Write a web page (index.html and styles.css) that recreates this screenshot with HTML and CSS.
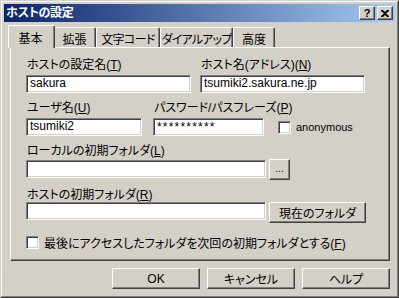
FILE: index.html
```html
<!DOCTYPE html>
<html lang="ja">
<head>
<meta charset="utf-8">
<title>ホストの設定</title>
<link rel="stylesheet" href="styles.css">
</head>
<body>
<div class="window">
  <div class="frame">
    <div class="titlebar">
      <span class="title">ホストの設定</span>
      <div class="caption-buttons">
        <span class="cbtn help-btn">?</span>
        <span class="cbtn close-btn">
          <svg width="8" height="7" viewBox="0 0 8 7"><path d="M0 0h2l2 2 2-2h2v1L5 3.5 8 6v1H6L4 5 2 7H0V6l3-2.5L0 1z" fill="#000"/></svg>
        </span>
      </div>
    </div>
    <div class="tabs">
      <div class="tab sel t1">基本</div>
      <div class="tab t2">拡張</div>
      <div class="tab t3">文字コード</div>
      <div class="tab t4">ダイアルアップ</div>
      <div class="tab t5">高度</div>
    </div>
    <div class="panel">
      <div class="row r1">
        <div class="field f-name">
          <div class="label">ホストの設定名(<u>T</u>)</div>
          <div class="input">sakura</div>
        </div>
        <div class="field f-host">
          <div class="label">ホスト名(アドレス)(<u>N</u>)</div>
          <div class="input">tsumiki2.sakura.ne.jp</div>
        </div>
      </div>
      <div class="row r2">
        <div class="field f-user">
          <div class="label">ユーザ名(<u>U</u>)</div>
          <div class="input">tsumiki2</div>
        </div>
        <div class="field f-pass">
          <div class="label">パスワード/パスフレーズ(<u>P</u>)</div>
          <div class="input pass">**********</div>
        </div>
        <div class="check anon">
          <span class="box"></span>
          <span class="check-text">anonymous</span>
        </div>
      </div>
      <div class="label l3">ローカルの初期フォルダ(<u>L</u>)</div>
      <div class="row r3">
        <div class="input wide"></div>
        <div class="btn browse">...</div>
      </div>
      <div class="label l4">ホストの初期フォルダ(<u>R</u>)</div>
      <div class="row r4">
        <div class="input wide"></div>
        <div class="btn current">現在のフォルダ</div>
      </div>
      <div class="check last">
        <span class="box"></span>
        <span class="check-text">最後にアクセスしたフォルダを次回の初期フォルダとする(<u>F</u>)</span>
      </div>
    </div>
    <div class="buttons">
      <div class="btn dlg">OK</div>
      <div class="btn dlg">キャンセル</div>
      <div class="btn dlg">ヘルプ</div>
    </div>
  </div>
</div>
</body>
</html>
```
FILE: styles.css
```css
* { box-sizing: border-box; }
html, body { margin: 0; padding: 0; background: #d4d0c8; }
body {
  font-family: "Liberation Sans", "Noto Sans CJK JP", sans-serif;
  font-size: 12px;
  color: #000;
  font-feature-settings: "palt";
}
u { text-decoration: underline; text-underline-offset: 1px; }

.window {
  width: 399px;
  height: 298px;
  border: 1px solid;
  border-color: #d4d0c8 #404040 #404040 #d4d0c8;
  background: #d4d0c8;
}
.frame {
  height: 100%;
  border: 1px solid;
  border-color: #ffffff #808080 #808080 #ffffff;
  padding: 2px;
}

.titlebar {
  height: 18px;
  display: flex;
  align-items: center;
  justify-content: space-between;
  background: linear-gradient(to right, #0a246a, #a6caf0);
  padding: 0 2px 0 2px;
}
.title {
  color: #fff;
  font-weight: bold;
  font-size: 12px;
  line-height: 14px;
  letter-spacing: -0.3px;
}
.caption-buttons { display: flex; gap: 2px; }
.cbtn {
  width: 16px;
  height: 14px;
  background: #d4d0c8;
  border: 1px solid;
  border-color: #ffffff #404040 #404040 #ffffff;
  box-shadow: inset -1px -1px #808080;
  display: flex;
  align-items: center;
  justify-content: center;
  font-weight: bold;
  font-size: 11px;
  line-height: 1;
}

.tabs {
  margin-top: 3px;
  height: 22px;
  display: flex;
  align-items: flex-end;
  padding-left: 6px;
}
.tab {
  height: 20px;
  border-top: 1px solid #fff;
  border-left: 1px solid #fff;
  border-right: 1px solid #404040;
  box-shadow: inset -1px 0 #808080;
  border-radius: 2px 2px 0 0;
  display: flex;
  align-items: center;
  justify-content: center;
  padding-top: 1px;
  white-space: nowrap;
  flex: none;
}
.t1 { width: 43px; }
.t2 { width: 43px; }
.t3 { width: 64px; letter-spacing: -0.6px; }
.t4 { width: 73px; letter-spacing: -0.8px; }
.t5 { width: 42px; }
.tab.sel {
  width: 47px;
  height: 23px;
  margin: 0 -2px -1px -2px;
  position: relative;
  z-index: 1;
  background: #d4d0c8;
  padding-top: 0;
  padding-right: 2px;
}

.panel {
  margin-left: 6px;
  width: 380px;
  height: 214px;
  border-top: 1px solid #fff;
  border-left: 1px solid #fff;
  border-right: 1px solid #404040;
  border-bottom: 1px solid #404040;
  box-shadow: inset -1px -1px #808080;
  padding: 10px 0 0 15px;
  display: flex;
  flex-direction: column;
}

.label {
  height: 14px;
  line-height: 14px;
  padding-left: 1px;
  white-space: nowrap;
}
.row { display: flex; }
.field { display: flex; flex-direction: column; gap: 3px; }
.input {
  height: 18px;
  background: #fff;
  border: 1px solid;
  border-color: #808080 #ffffff #ffffff #808080;
  box-shadow: inset 1px 1px #404040, inset -1px -1px #d4d0c8;
  padding: 0 3px;
  line-height: 15px;
  white-space: nowrap;
  overflow: hidden;
}
.pass { letter-spacing: 1.2px; line-height: 17px; }
.f-name, .f-host { width: 165px; }
.f-host { margin-left: 9px; }
.r2 { margin-top: 8px; align-items: flex-end; }
.f-user { width: 116px; }
.f-pass { width: 111px; margin-left: 11px; }
.check { display: flex; align-items: center; }
.box {
  width: 13px;
  height: 13px;
  background: #fff;
  border: 1px solid;
  border-color: #808080 #ffffff #ffffff #808080;
  box-shadow: inset 1px 1px #404040, inset -1px -1px #d4d0c8;
  flex: none;
}
.anon { margin-left: 14px; height: 16px; margin-bottom: 1px; }
.anon .check-text { margin-left: 5px; font-size: 11px; }

.l3 { margin-top: 8px; }
.r3 { margin-top: 1px; gap: 3px; align-items: flex-start; }
.r3 .input { margin-top: 1px; }
.wide { width: 240px; }
.btn {
  height: 21px;
  background: #d4d0c8;
  border: 1px solid;
  border-color: #ffffff #404040 #404040 #ffffff;
  box-shadow: inset -1px -1px #808080;
  display: flex;
  align-items: center;
  justify-content: center;
  white-space: nowrap;
}
.browse { width: 21px; font-size: 10px; padding-bottom: 2px; }
.l4 { margin-top: 8px; }
.r4 { margin-top: 0; gap: 3px; align-items: flex-start; }
.current { width: 97px; }

.last { margin-top: 11px; }
.last .check-text { margin-left: 5px; }

.buttons {
  display: flex;
  justify-content: flex-end;
  gap: 7px;
  margin-top: 7px;
  padding-right: 5px;
}
.dlg { width: 88px; }
```
